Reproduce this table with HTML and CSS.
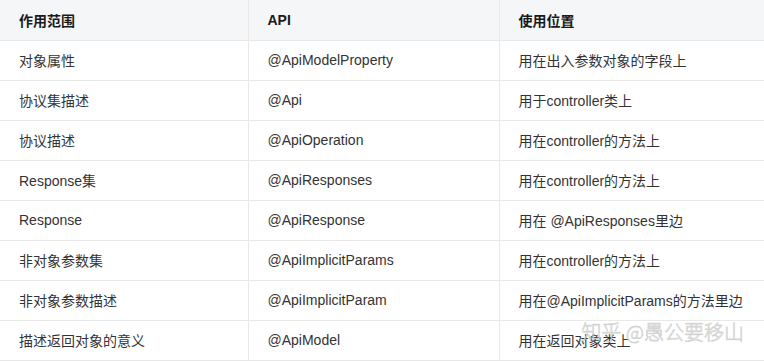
FILE: index.html
```html
<!DOCTYPE html>
<html lang="zh-CN">
<head>
<meta charset="utf-8">
<link rel="stylesheet" href="styles.css">
</head>
<body>
<div class="wrap">
<table class="api-table">
  <colgroup><col class="c1"><col class="c2"><col class="c3"></colgroup>
  <thead>
    <tr><th>作用范围</th><th>API</th><th>使用位置</th></tr>
  </thead>
  <tbody>
    <tr><td>对象属性</td><td>@ApiModelProperty</td><td>用在出入参数对象的字段上</td></tr>
    <tr><td>协议集描述</td><td>@Api</td><td>用于controller类上</td></tr>
    <tr><td>协议描述</td><td>@ApiOperation</td><td>用在controller的方法上</td></tr>
    <tr><td>Response集</td><td>@ApiResponses</td><td>用在controller的方法上</td></tr>
    <tr><td>Response</td><td>@ApiResponse</td><td>用在 @ApiResponses里边</td></tr>
    <tr><td>非对象参数集</td><td>@ApiImplicitParams</td><td>用在controller的方法上</td></tr>
    <tr><td>非对象参数描述</td><td>@ApiImplicitParam</td><td>用在@ApiImplicitParams的方法里边</td></tr>
    <tr><td>描述返回对象的意义</td><td>@ApiModel</td><td>用在返回对象类上</td></tr>
  </tbody>
</table>
<div class="watermark">知乎 @愚公要移山</div>
</div>
</body>
</html>
```
FILE: styles.css
```css
html, body {
  margin: 0;
  padding: 0;
  background: #fff;
}
.wrap {
  position: relative;
  width: 764px;
}
.api-table {
  width: 764px;
  border-collapse: collapse;
  table-layout: fixed;
  font-family: "Liberation Sans", "Noto Sans CJK SC", sans-serif;
  font-size: 14px;
  color: #333;
}
.c1 { width: 248px; }
.c2 { width: 251px; }
.c3 { width: 265px; }
.api-table th,
.api-table td {
  height: 40px;
  box-sizing: border-box;
  padding: 0 19px;
  text-align: left;
  vertical-align: middle;
  border-bottom: 1px solid #e9e9e9;
  border-left: 1px solid #e9e9e9;
  white-space: nowrap;
}
.api-table th:first-child,
.api-table td:first-child {
  border-left: none;
}
.api-table th {
  background: #f5f6f8;
  font-weight: bold;
  color: #1a1a1a;
}
.watermark {
  position: absolute;
  right: 20px;
  bottom: 17px;
  font-family: "Noto Sans CJK SC", sans-serif;
  font-size: 20px;
  font-weight: 300;
  line-height: 24px;
  color: rgba(255, 255, 255, 0.8);
  -webkit-text-stroke: 0.8px rgba(175, 175, 175, 0.55);
}
```
